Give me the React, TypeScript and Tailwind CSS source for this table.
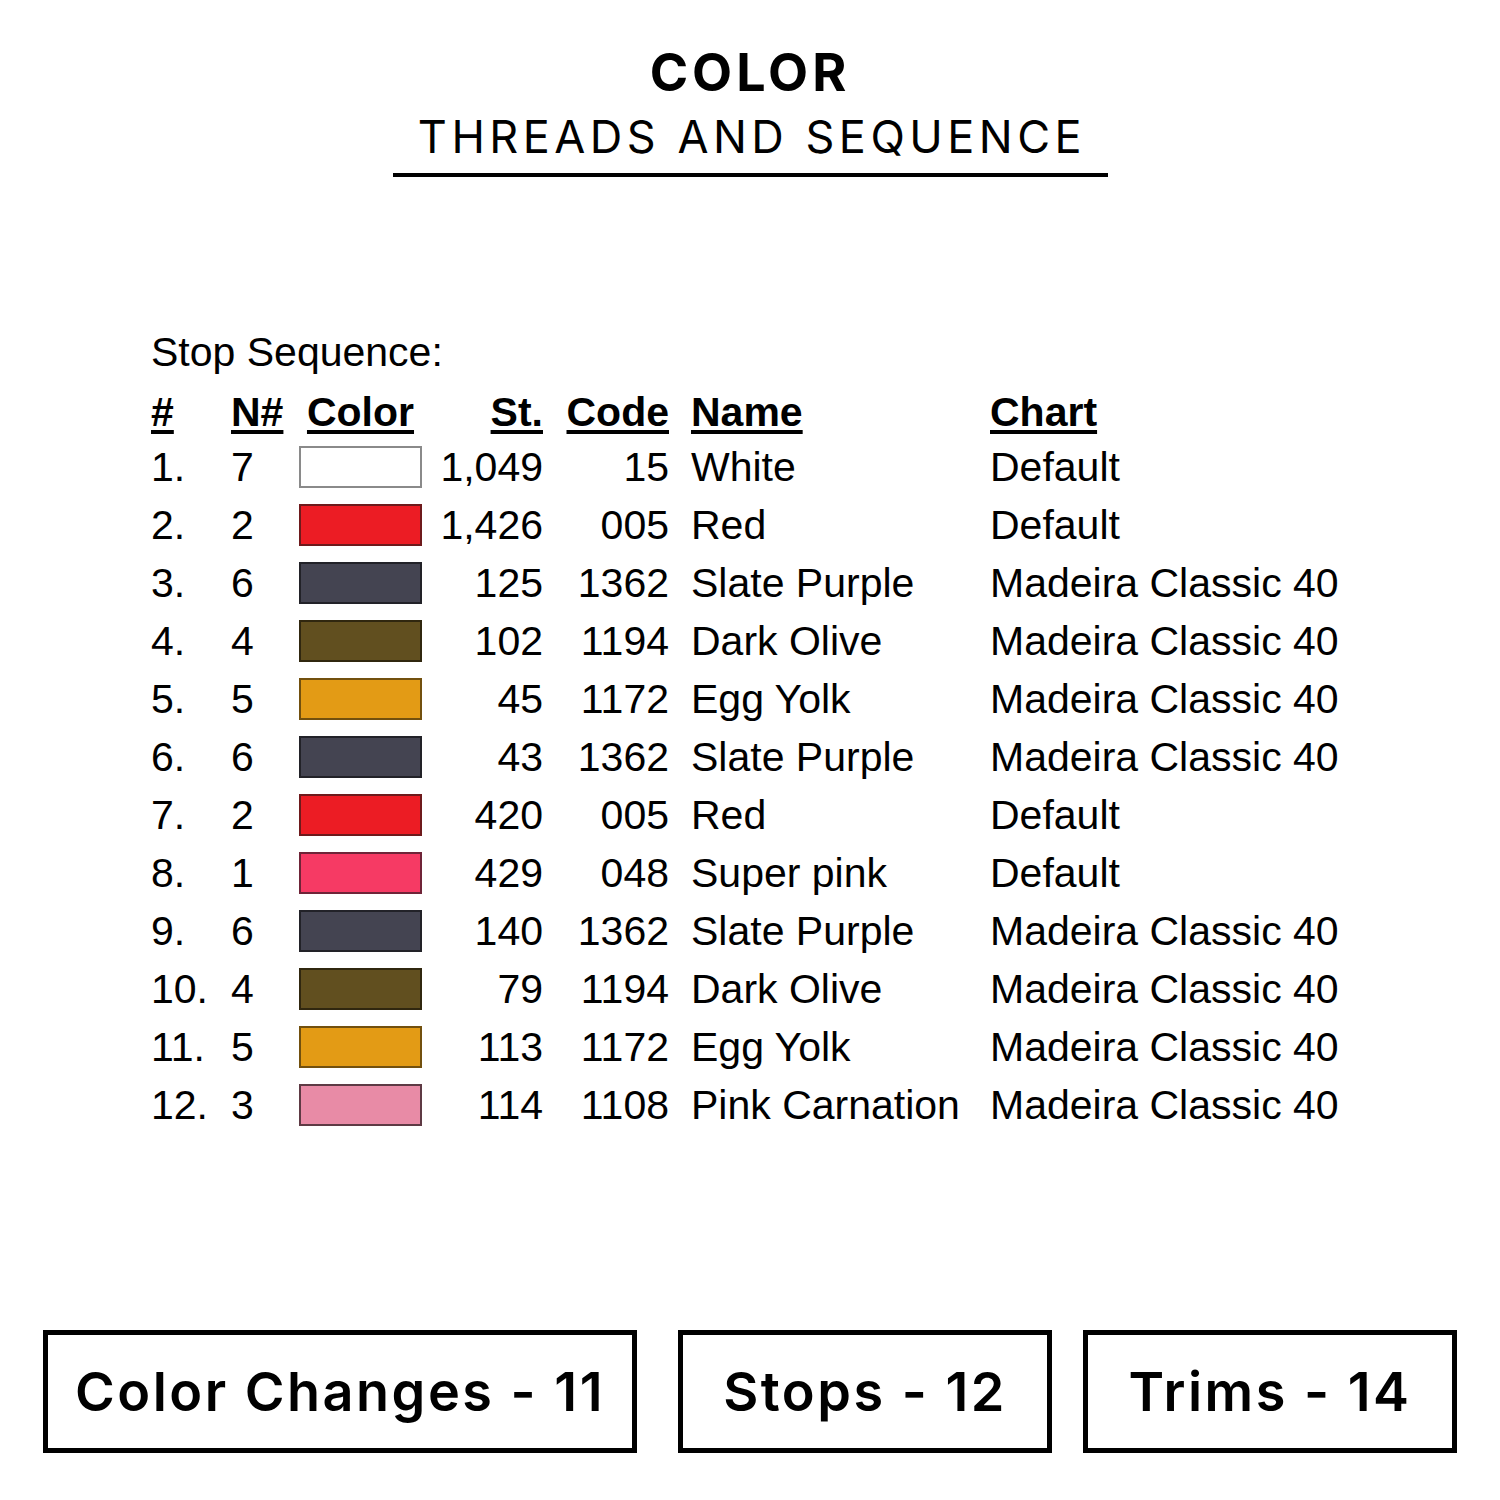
const rows = [
  { n: "1.", needle: "7", swatch: "bg-white border-[#8a8a8a]", st: "1,049", code: "15", name: "White", chart: "Default" },
  { n: "2.", needle: "2", swatch: "bg-[#ec1c24] border-[#6e1a1c]", st: "1,426", code: "005", name: "Red", chart: "Default" },
  { n: "3.", needle: "6", swatch: "bg-[#444451] border-[#222228]", st: "125", code: "1362", name: "Slate Purple", chart: "Madeira Classic 40" },
  { n: "4.", needle: "4", swatch: "bg-[#614f1f] border-[#30270f]", st: "102", code: "1194", name: "Dark Olive", chart: "Madeira Classic 40" },
  { n: "5.", needle: "5", swatch: "bg-[#e39b15] border-[#72500e]", st: "45", code: "1172", name: "Egg Yolk", chart: "Madeira Classic 40" },
  { n: "6.", needle: "6", swatch: "bg-[#444451] border-[#222228]", st: "43", code: "1362", name: "Slate Purple", chart: "Madeira Classic 40" },
  { n: "7.", needle: "2", swatch: "bg-[#ec1c24] border-[#6e1a1c]", st: "420", code: "005", name: "Red", chart: "Default" },
  { n: "8.", needle: "1", swatch: "bg-[#f63a64] border-[#6f2438]", st: "429", code: "048", name: "Super pink", chart: "Default" },
  { n: "9.", needle: "6", swatch: "bg-[#444451] border-[#222228]", st: "140", code: "1362", name: "Slate Purple", chart: "Madeira Classic 40" },
  { n: "10.", needle: "4", swatch: "bg-[#614f1f] border-[#30270f]", st: "79", code: "1194", name: "Dark Olive", chart: "Madeira Classic 40" },
  { n: "11.", needle: "5", swatch: "bg-[#e39b15] border-[#72500e]", st: "113", code: "1172", name: "Egg Yolk", chart: "Madeira Classic 40" },
  { n: "12.", needle: "3", swatch: "bg-[#e88ba6] border-[#5e3a44]", st: "114", code: "1108", name: "Pink Carnation", chart: "Madeira Classic 40" },
]

const cols = "grid grid-cols-[80px_68px_123px_121px_126px_321px_auto] items-center"
const head = "underline decoration-[4px] underline-offset-[4px] font-bold"

const StatBox = ({ label, className }: { label: string; className: string }) => (
  <div className={`h-[123px] border-[5px] border-black flex items-center justify-center ${className}`}>
    <span className="text-[54px] font-semibold tracking-[2.5px] text-black">{label}</span>
  </div>
)

export default function App() {
  return (
    <div className="w-[1500px] h-[1500px] bg-white flex flex-col items-center font-['Inter',sans-serif] text-black">
      <div className="mt-[47px] text-[52px] leading-[52px] font-bold tracking-[4px]">COLOR</div>
      <div className="mt-[12px] pl-[4px] text-[45px] leading-[52px] tracking-[4.5px]">THREADS AND SEQUENCE</div>
      <div className="mt-[10px] w-[715px] h-[4px] bg-black" />

      <div className="w-full pl-[151px] mt-[146px] font-['Liberation_Sans',Arial,sans-serif] text-[41px] leading-[58px] text-black">
        <div className="h-[58px]">Stop Sequence:</div>
        <div className={`${cols} h-[58px] mt-[2px]`}>
          <div><span className={head}>#</span></div>
          <div><span className={head}>N#</span></div>
          <div className="text-center"><span className={head}>Color</span></div>
          <div className="text-right"><span className={head}>St.</span></div>
          <div className="text-right"><span className={head}>Code</span></div>
          <div className="pl-[22px]"><span className={head}>Name</span></div>
          <div><span className={head}>Chart</span></div>
        </div>
        <div className="mt-[-3px]">
          {rows.map((r, i) => (
            <div key={i} className={`${cols} h-[58px]`}>
              <div>{r.n}</div>
              <div>{r.needle}</div>
              <div className={`h-[42px] border-2 ${r.swatch}`} />
              <div className="text-right">{r.st}</div>
              <div className="text-right">{r.code}</div>
              <div className="pl-[22px] whitespace-nowrap">{r.name}</div>
              <div className="whitespace-nowrap">{r.chart}</div>
            </div>
          ))}
        </div>
      </div>

      <div className="w-full flex px-[43px] mt-auto mb-[47px]">
        <StatBox label="Color Changes - 11" className="w-[594px]" />
        <StatBox label="Stops - 12" className="w-[374px] ml-[41px]" />
        <StatBox label="Trims - 14" className="w-[374px] ml-[31px]" />
      </div>
    </div>
  )
}
